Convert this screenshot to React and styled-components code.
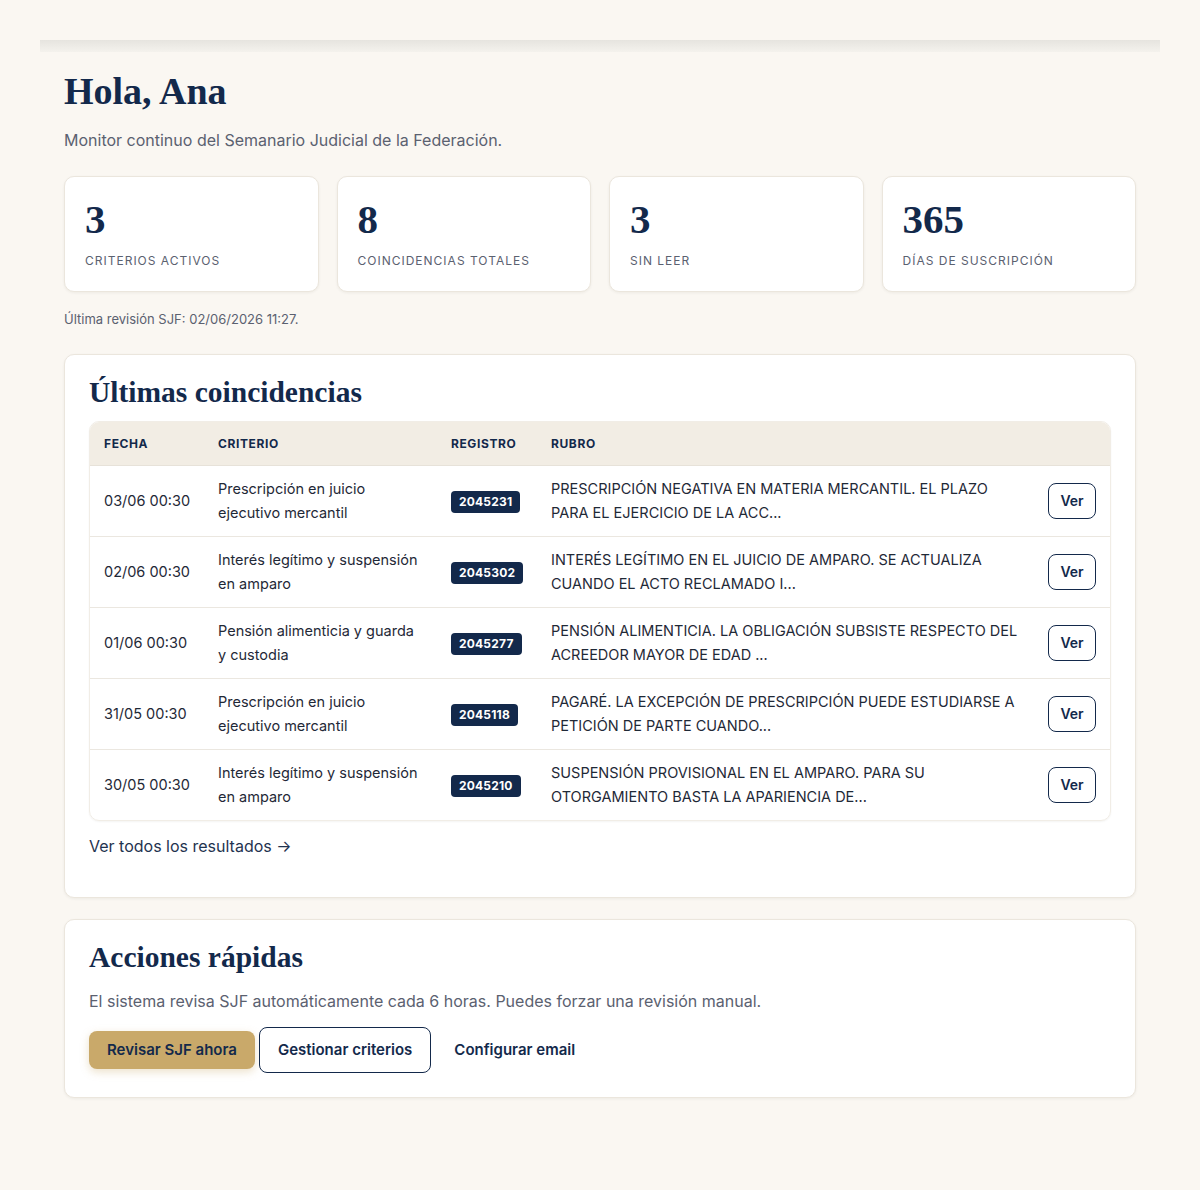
import React from "react";
import styled, { createGlobalStyle } from "styled-components";

const GlobalStyle = createGlobalStyle`
  body {
    margin: 0;
    background: #faf7f2;
    font-family: Inter, "Noto Sans", sans-serif;
    color: #1f2937;
  }
  * { box-sizing: border-box; }
`;

const Page = styled.div`
  padding: 40px 40px 92px;
`;

const TopStrip = styled.div`
  height: 12px;
  background: linear-gradient(#e6e4df, #f4f2ed);
`;

const Main = styled.main`
  padding: 17px 24px 0;
`;

const Title = styled.h1`
  margin: 0;
  font-family: "Liberation Serif", serif;
  font-weight: 700;
  font-size: 38px;
  line-height: 44px;
  color: #13294b;
`;

const Subtitle = styled.p`
  margin: 15px 0 0;
  font-size: 16px;
  line-height: 24px;
  color: #5b6170;
`;

const Stats = styled.div`
  display: grid;
  grid-template-columns: repeat(4, 1fr);
  gap: 18px;
  margin-top: 24px;
`;

const StatCard = styled.div`
  background: #fff;
  border: 1px solid #ebe6dd;
  border-radius: 10px;
  box-shadow: 0 1px 3px rgba(30, 30, 20, 0.06);
  height: 116px;
  padding: 21px 20px 0;
`;

const StatValue = styled.div`
  font-family: "Liberation Serif", serif;
  font-weight: 700;
  font-size: 41px;
  line-height: 42px;
  color: #13294b;
`;

const StatLabel = styled.div`
  margin-top: 13px;
  font-size: 12px;
  letter-spacing: 1px;
  text-transform: uppercase;
  color: #5b6170;
`;

const Meta = styled.p`
  margin: 19px 0 0;
  font-size: 13px;
  color: #5b6170;
`;

const Card = styled.section`
  background: #fff;
  border: 1px solid #ebe6dd;
  border-radius: 10px;
  box-shadow: 0 1px 3px rgba(30, 30, 20, 0.06);
  padding: 20px 24px 24px;
  margin-top: ${({ $mt }) => $mt || "0"};
`;

const CardTitle = styled.h2`
  margin: 0;
  font-family: "Liberation Serif", serif;
  font-weight: 700;
  font-size: 29.5px;
  line-height: 34px;
  color: #13294b;
`;

const TableWrap = styled.div`
  margin-top: 12px;
  border-radius: 10px;
  overflow: hidden;
  border: 1px solid #f1ede6;
  box-shadow: 0 1px 2px rgba(30, 30, 20, 0.05);
`;

const Table = styled.table`
  width: 100%;
  border-collapse: collapse;
  table-layout: fixed;
`;

const Th = styled.th`
  background: #f2ede4;
  height: 43px;
  padding: 0 14px;
  text-align: left;
  font-size: 12px;
  font-weight: 700;
  letter-spacing: 0.6px;
  color: #13294b;
  border-bottom: 1px solid #e7e2d9;
  width: ${({ $w }) => $w || "auto"};
`;

const Row = styled.tr`
  & + & td {
    border-top: 1px solid #ebe7e0;
  }
`;

const Td = styled.td`
  height: 71px;
  padding: 0 ${({ $nowrap }) => ($nowrap ? "0" : "14px")} 0 14px;
  font-size: 14.5px;
  line-height: 23.5px;
  color: #1f2937;
  vertical-align: middle;
  white-space: ${({ $nowrap }) => ($nowrap ? "nowrap" : "normal")};
  text-align: ${({ $align }) => $align || "left"};
`;

const Badge = styled.span`
  display: inline-block;
  background: #13294b;
  color: #fff;
  font-size: 12px;
  font-weight: 700;
  letter-spacing: 0.2px;
  line-height: 16px;
  padding: 3px 8px;
  border-radius: 4px;
`;

const Rubro = styled.div`
  text-transform: uppercase;
`;

const SmallButton = styled.button`
  font-family: inherit;
  font-size: 14px;
  font-weight: 600;
  color: #13294b;
  background: #fff;
  border: 1px solid #13294b;
  border-radius: 8px;
  width: 48px;
  height: 36px;
  padding: 0;
  cursor: pointer;
`;

const LinkText = styled.a`
  display: inline-block;
  margin-top: 13px;
  font-size: 16px;
  line-height: 24px;
  color: #1f3350;
  text-decoration: none;
`;

const LinkSpacer = styled.div`
  height: 15px;
`;

const Description = styled.p`
  margin: 15px 0 0;
  font-size: 16px;
  line-height: 24px;
  color: #5b6170;
`;

const Actions = styled.div`
  display: flex;
  align-items: center;
  gap: 4px;
  margin-top: 14px;
`;

const Button = styled.button`
  font-family: inherit;
  font-size: 15px;
  font-weight: 600;
  color: #13294b;
  cursor: pointer;
  border-radius: 8px;
  line-height: 20px;
  padding: ${({ $variant }) => ($variant === "primary" ? "9px 18px" : $variant === "outline" ? "12px 18px" : "12px 19px")};
  background: ${({ $variant }) => ($variant === "primary" ? "#c9a96a" : $variant === "outline" ? "#fff" : "transparent")};
  border: ${({ $variant }) => ($variant === "outline" ? "1px solid #13294b" : "none")};
  box-shadow: ${({ $variant }) => ($variant === "primary" ? "0 3px 8px rgba(201, 169, 106, 0.35)" : "none")};
`;

const stats = [
  { value: "3", label: "Criterios activos" },
  { value: "8", label: "Coincidencias totales" },
  { value: "3", label: "Sin leer" },
  { value: "365", label: "Días de suscripción" },
];

const rows = [
  {
    fecha: "03/06 00:30",
    criterio: "Prescripción en juicio ejecutivo mercantil",
    registro: "2045231",
    rubro: "Prescripción negativa en materia mercantil. El plazo para el ejercicio de la acc...",
  },
  {
    fecha: "02/06 00:30",
    criterio: "Interés legítimo y suspensión en amparo",
    registro: "2045302",
    rubro: "Interés legítimo en el juicio de amparo. Se actualiza cuando el acto reclamado i...",
  },
  {
    fecha: "01/06 00:30",
    criterio: "Pensión alimenticia y guarda y custodia",
    registro: "2045277",
    rubro: "Pensión alimenticia. La obligación subsiste respecto del acreedor mayor de edad ...",
  },
  {
    fecha: "31/05 00:30",
    criterio: "Prescripción en juicio ejecutivo mercantil",
    registro: "2045118",
    rubro: "Pagaré. La excepción de prescripción puede estudiarse a petición de parte cuando...",
  },
  {
    fecha: "30/05 00:30",
    criterio: "Interés legítimo y suspensión en amparo",
    registro: "2045210",
    rubro: "Suspensión provisional en el amparo. Para su otorgamiento basta la apariencia de...",
  },
];

export default function App() {
  return (
    <>
      <GlobalStyle />
      <Page>
        <TopStrip />
        <Main>
          <Title>Hola, Ana</Title>
          <Subtitle>Monitor continuo del Semanario Judicial de la Federación.</Subtitle>

          <Stats>
            {stats.map((s) => (
              <StatCard key={s.label}>
                <StatValue>{s.value}</StatValue>
                <StatLabel>{s.label}</StatLabel>
              </StatCard>
            ))}
          </Stats>
          <Meta>Última revisión SJF: 02/06/2026 11:27.</Meta>

          <Card $mt="27px">
            <CardTitle>Últimas coincidencias</CardTitle>
            <TableWrap>
              <Table>
                <thead>
                  <tr>
                    <Th $w="114px">FECHA</Th>
                    <Th $w="233px">CRITERIO</Th>
                    <Th $w="100px">REGISTRO</Th>
                    <Th>RUBRO</Th>
                    <Th $w="76px" />
                  </tr>
                </thead>
                <tbody>
                  {rows.map((r) => (
                    <Row key={r.registro}>
                      <Td $nowrap>{r.fecha}</Td>
                      <Td>{r.criterio}</Td>
                      <Td>
                        <Badge>{r.registro}</Badge>
                      </Td>
                      <Td>
                        <Rubro>{r.rubro}</Rubro>
                      </Td>
                      <Td $align="right">
                        <SmallButton>Ver</SmallButton>
                      </Td>
                    </Row>
                  ))}
                </tbody>
              </Table>
            </TableWrap>
            <LinkText href="#">Ver todos los resultados →</LinkText>
            <LinkSpacer />
          </Card>

          <Card $mt="21px">
            <CardTitle>Acciones rápidas</CardTitle>
            <Description>
              El sistema revisa SJF automáticamente cada 6 horas. Puedes forzar una revisión manual.
            </Description>
            <Actions>
              <Button $variant="primary">Revisar SJF ahora</Button>
              <Button $variant="outline">Gestionar criterios</Button>
              <Button>Configurar email</Button>
            </Actions>
          </Card>
        </Main>
      </Page>
    </>
  );
}
